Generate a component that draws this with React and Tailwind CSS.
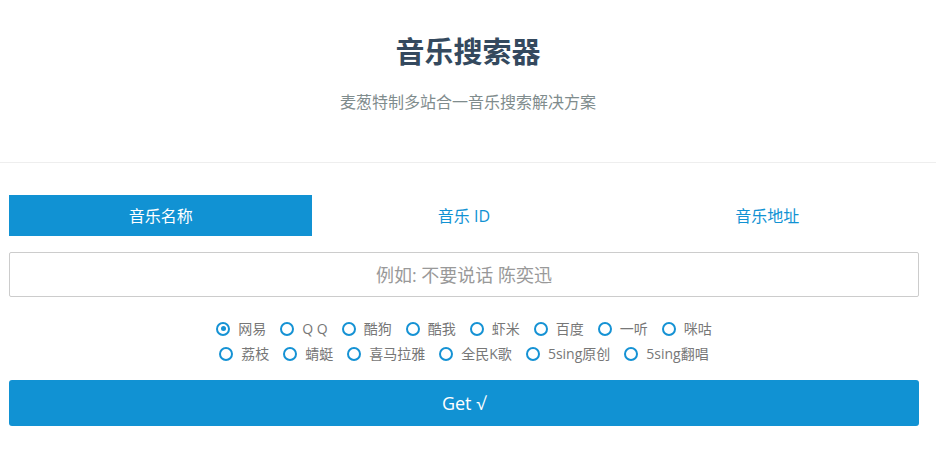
import { useState } from "react";

const row1 = [
  { id: "netease", label: "网易" },
  { id: "qq", label: "Q Q" },
  { id: "kugou", label: "酷狗" },
  { id: "kuwo", label: "酷我" },
  { id: "xiami", label: "虾米" },
  { id: "baidu", label: "百度" },
  { id: "1ting", label: "一听" },
  { id: "migu", label: "咪咕" },
];

const row2 = [
  { id: "lizhi", label: "荔枝" },
  { id: "qingting", label: "蜻蜓" },
  { id: "ximalaya", label: "喜马拉雅" },
  { id: "kg", label: "全民K歌" },
  { id: "5singyc", label: "5sing原创" },
  { id: "5singfc", label: "5sing翻唱" },
];

const tabs = ["音乐名称", "音乐 ID", "音乐地址"];

function Radio({ item, checked, onPick }) {
  return (
    <label
      className="flex items-center mr-[14px] cursor-pointer"
      onClick={() => onPick(item.id)}
    >
      <span className="w-[14px] h-[14px] rounded-full border-[2.5px] border-[#1592d4] flex items-center justify-center">
        {checked && <span className="w-[5px] h-[5px] rounded-full bg-[#1592d4]" />}
      </span>
      <span className="ml-[8px] text-[14px] text-[#777]">{item.label}</span>
    </label>
  );
}

export default function App() {
  const [tab, setTab] = useState(0);
  const [site, setSite] = useState("netease");

  return (
    <div
      className="w-[936px] h-[465px] bg-white"
      style={{ fontFamily: '"Open Sans", "Noto Sans CJK SC", sans-serif' }}
    >
      {/* Header */}
      <div className="h-[163px] border-b border-[#eeeeee] flex flex-col items-center">
        <h1 className="mt-[31px] h-[42px] leading-[42px] text-[29px] font-bold text-[#34495e]">
          音乐搜索器
        </h1>
        <p className="mt-[17px] h-[24px] leading-[24px] text-[16px] text-[#7f8c8d]">
          麦葱特制多站合一音乐搜索解决方案
        </p>
      </div>

      <div className="pl-[9px] pr-[17px]">
        {/* Tabs */}
        <div className="mt-[32px] grid grid-cols-3 h-[41px]">
          {tabs.map((t, i) => (
            <button
              key={t}
              onClick={() => setTab(i)}
              className={
                i === tab
                  ? "bg-[#1192d3] text-white text-[16px] flex items-center justify-center"
                  : "text-[#1192d3] text-[16px] flex items-center justify-center"
              }
            >
              {t}
            </button>
          ))}
        </div>

        {/* Input */}
        <input
          type="text"
          placeholder="例如: 不要说话 陈奕迅"
          className="mt-[16px] w-full h-[45px] border border-[#cccccc] rounded-[2px] text-center text-[18px] text-[#555] placeholder:text-[#999] outline-none"
        />

        {/* Sources */}
        <div className="mt-[19px] flex justify-center h-[25px] items-center pl-[14px]">
          {row1.map((s) => (
            <Radio key={s.id} item={s} checked={site === s.id} onPick={setSite} />
          ))}
        </div>
        <div className="flex justify-center h-[25px] items-center pl-[14px]">
          {row2.map((s) => (
            <Radio key={s.id} item={s} checked={site === s.id} onPick={setSite} />
          ))}
        </div>

        {/* Submit */}
        <button className="mt-[14px] w-full h-[46px] rounded-[3px] bg-[#1192d3] text-white text-[18px]">
          Get √
        </button>
      </div>
    </div>
  );
}
